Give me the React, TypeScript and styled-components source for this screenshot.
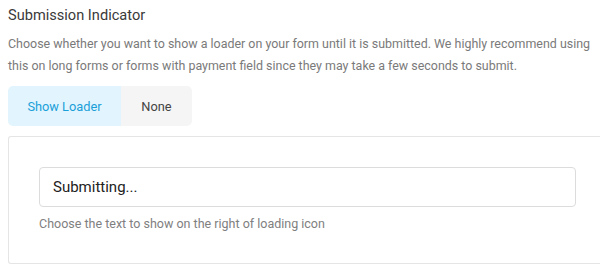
import React, { useState } from 'react';
import styled, { createGlobalStyle } from 'styled-components';

const GlobalStyle = createGlobalStyle`
  body {
    margin: 0;
    background: #fff;
    font-family: Roboto, "Liberation Sans", sans-serif;
    overflow: hidden;
  }
`;

const Page = styled.div`
  padding: 5px 0 0 8px;
  width: 600px;
  box-sizing: border-box;
`;

const Title = styled.h3`
  margin: 0;
  font-size: 14.6px;
  font-weight: 400;
  color: #3a3a3a;
  line-height: 20px;
`;

const Description = styled.p`
  margin: 8px 0 0;
  font-size: 12.45px;
  line-height: 22px;
  color: #7a7a7a;
`;

const Toggle = styled.div`
  display: inline-flex;
  margin-top: 9px;
  border-radius: 5px;
  overflow: hidden;
`;

const ToggleButton = styled.button<{ $active?: boolean }>`
  border: none;
  height: 40px;
  width: ${(p) => (p.$active ? '113px' : '71px')};
  padding: 0;
  font-family: inherit;
  font-size: 12.8px;
  cursor: pointer;
  background: ${(p) => (p.$active ? '#e2f5fe' : '#f5f5f5')};
  color: ${(p) => (p.$active ? '#1a9fd9' : '#444')};
`;

const Panel = styled.div`
  margin-top: 10px;
  border: 1px solid #e5e5e5;
  border-right: none;
  border-radius: 3px 0 0 3px;
  padding: 30px 0 30px 30px;
  height: 128px;
  box-sizing: border-box;
`;

const Input = styled.input`
  display: block;
  width: 537px;
  height: 40px;
  box-sizing: border-box;
  border: 1px solid #dcdcdc;
  border-radius: 4px;
  padding: 0 13px;
  font-family: inherit;
  font-size: 15px;
  color: #222;
  outline: none;
`;

const Help = styled.div`
  margin-top: 9px;
  font-size: 12.5px;
  color: #808080;
  line-height: 16px;
`;

export default function App() {
  const [mode, setMode] = useState<'loader' | 'none'>('loader');
  const [text, setText] = useState('Submitting...');
  return (
    <Page>
      <GlobalStyle />
      <Title>Submission Indicator</Title>
      <Description>
        Choose whether you want to show a loader on your form until it is submitted. We highly recommend using
        this on long forms or forms with payment field since they may take a few seconds to submit.
      </Description>
      <Toggle>
        <ToggleButton $active={mode === 'loader'} onClick={() => setMode('loader')}>
          Show Loader
        </ToggleButton>
        <ToggleButton $active={mode === 'none'} onClick={() => setMode('none')}>
          None
        </ToggleButton>
      </Toggle>
      {mode === 'loader' && (
        <Panel>
          <Input value={text} onChange={(e) => setText(e.target.value)} />
          <Help>Choose the text to show on the right of loading icon</Help>
        </Panel>
      )}
    </Page>
  );
}
